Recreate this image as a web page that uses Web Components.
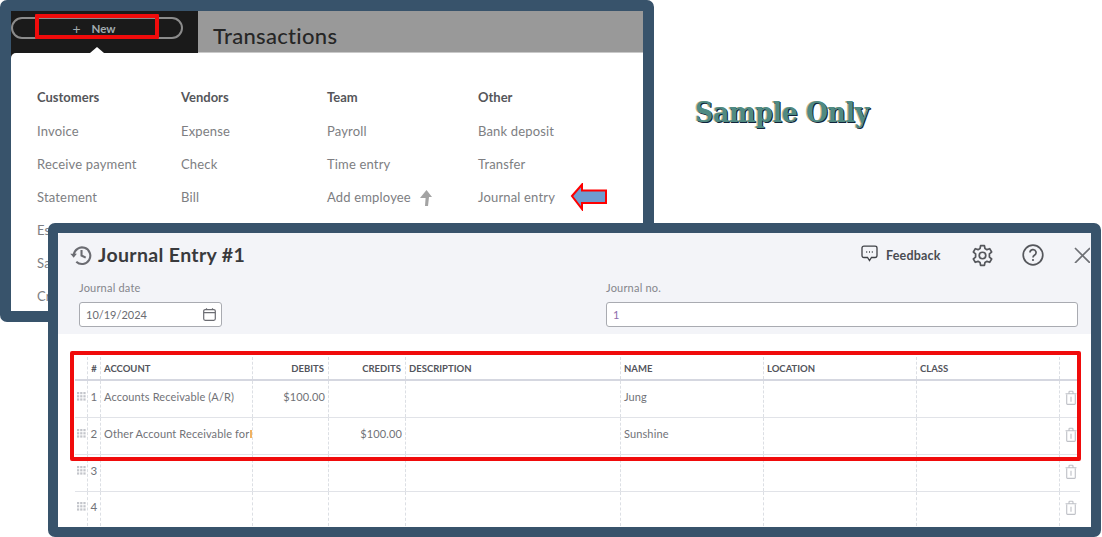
<!DOCTYPE html>
<html lang="en">
<head>
<meta charset="UTF-8">
<title>Journal Entry</title>
<style>
  html, body { margin: 0; height: 537px; overflow: hidden; background: #fff; }
  body { position: relative; width: 1102px; font-family: Lato, "Liberation Sans", sans-serif; }
</style>
</head>
<body>
<back-window></back-window>
<sample-mark>Sample Only</sample-mark>
<journal-window></journal-window>

<script>
const FRAME = '#38536b';

class BackWindow extends HTMLElement {
  constructor() {
    super();
    this.attachShadow({ mode: 'open' });
  }
  connectedCallback() {
    // first column runs under the journal window, only the start of those labels shows
    const cols = [
      ['Customers', 144, ['Invoice', 'Receive payment', 'Statement', 'Es', 'Sa', 'Cr']],
      ['Vendors', 146, ['Expense', 'Check', 'Bill']],
      ['Team', 151, ['Payroll', 'Time entry', 'Add employee']],
      ['Other', 0, ['Bank deposit', 'Transfer', 'Journal entry']],
    ];
    const up = `<svg width="13" height="16" viewBox="0 0 13 16"><path d="M7.5 0 13 7H10L9 16H6L6.6 8H1Z" fill="#a3a3a3"/></svg>`;
    const arrow = `<svg class="arrow" width="38" height="28" viewBox="0 0 38 28"><path d="M2 13 12 1.5V7.5H36V20H12V26Z" fill="#6f9ccf" stroke="#f00" stroke-width="2"/></svg>`;
    this.shadowRoot.innerHTML = `
      <style>
        :host { position: absolute; left: 0; top: 0; width: 654px; height: 322px; box-sizing: border-box;
          border: 11px solid ${FRAME}; border-radius: 7px; background: #1a1a1a; overflow: hidden; display: block; }
        .top { display: flex; height: 42px; }
        .left { width: 187px; padding-top: 6px; box-sizing: border-box; }
        .pill { height: 22px; width: 172px; box-sizing: border-box; border: 2px solid #8b8b8b; border-radius: 11px;
          display: flex; align-items: center; justify-content: center; gap: 11px; padding-right: 6px;
          color: #a2abaf; font-size: 11.5px; font-weight: 700; }
        .pill span:first-child { font-size: 14px; font-weight: 400; }
        .title { flex: 1; background: #999; color: #262626; font-size: 22px; font-weight: 500;
          padding: 11px 0 0 15px; box-sizing: border-box; letter-spacing: .3px; border-bottom: 1px solid #c9c9c9; }
        .menu { position: relative; background: #fff; height: 258px; border-radius: 5px 0 0 0;
          display: flex; padding: 36px 0 0 26px; box-sizing: border-box; }
        .caret { position: absolute; left: 79px; top: -6px; width: 0; height: 0;
          border: 7px solid transparent; border-top: 0; border-bottom: 6px solid #fff; }
        .col h4 { margin: 0 0 18px; font-size: 13px; line-height: 16px; font-weight: 700; color: #55565a; }
        .col div { font-size: 13px; line-height: 17px; margin-bottom: 16px; color: #7d7e82; white-space: nowrap;
          display: flex; align-items: center; gap: 8px; letter-spacing: .17px; }
        .arrow { position: absolute; left: 559px; top: 130px; }
        .mark { position: absolute; left: 24px; top: 3px; width: 124px; height: 25px; box-sizing: border-box;
          border: 4px solid #f00b0b; border-radius: 1px; }
      </style>
      <div class="top">
        <div class="left"><div class="pill"><span>+</span><span>New</span></div></div>
        <div class="title">Transactions</div>
      </div>
      <div class="menu">
        <i class="caret"></i>
        ${cols.map(c => `<section class="col" style="${c[1] ? 'width:' + c[1] + 'px' : ''}">
          <h4>${c[0]}</h4>
          ${c[2].map(t => `<div>${t}${t === 'Add employee' ? up : ''}</div>`).join('')}
        </section>`).join('')}
        ${arrow}
      </div>
      <i class="mark"></i>`;
  }
}
customElements.define('back-window', BackWindow);

class SampleMark extends HTMLElement {
  constructor() {
    super();
    this.attachShadow({ mode: 'open' });
    this.shadowRoot.innerHTML = `
      <style>
        :host { position: absolute; left: 695px; top: 96px; display: block; white-space: nowrap;
          font: 700 28px/34px "DejaVu Serif Condensed", "DejaVu Serif", serif; font-stretch: condensed; letter-spacing: -.32px; color: #4f8a82;
          text-shadow: 1px 1px 0 #10243a, -1px 0 0 #c9b98d; }
      </style>
      <slot></slot>`;
  }
}
customElements.define('sample-mark', SampleMark);

class JournalTable extends HTMLElement {
  constructor() {
    super();
    this.attachShadow({ mode: 'open' });
  }
  connectedCallback() {
    const trash = `<svg width="12" height="16" viewBox="0 0 14 17" fill="none" stroke="#bfc1c7" stroke-width="1.3"><path d="M2 4.5V15.3Q2 16 2.8 16H11.2Q12 16 12 15.3V4.5M.6 3.5H13.4M4.7 3.3V1.4Q4.7.7 5.4.7H8.6Q9.3.7 9.3 1.4V3.3M7 7V13"/></svg>`;
    const grip = `<svg width="9" height="9" viewBox="0 0 9 9" fill="#c3c5cb">${[0, 1, 2].map(y => [0, 1, 2].map(x => `<rect x="${x * 3.2}" y="${y * 3.2}" width="2.2" height="2.2"/>`).join('')).join('')}</svg>`;
    const rows = [
      ['1', 'Accounts Receivable (A/R)', '$100.00', '', 'Jung'],
      ['2', 'Other Account Receivable for', '', '$100.00', 'Sunshine'],
      ['3', '', '', '', ''],
      ['4', '', '', '', ''],
    ];
    const head = ['', '#', 'ACCOUNT', 'DEBITS', 'CREDITS', 'DESCRIPTION', 'NAME', 'LOCATION', 'CLASS', ''];
    const alignR = i => i === 3 || i === 4;
    this.shadowRoot.innerHTML = `
      <style>
        :host { display: block; width: 1005px; }
        .row { display: grid; grid-template-columns: 12px 13px 152px 76px 77px 215px 143px 153px 143px 21px; }
        .head { height: 24px; border-bottom: 2px solid #d5d7e0; box-sizing: border-box; }
        .body { height: 37px; border-bottom: 1px solid #e1e3e8; box-sizing: border-box; }
        .body:last-child { height: 34px; border-bottom: 0; }
        .c { border-left: 1px dashed #dcdfe4; box-sizing: border-box; display: flex; align-items: center;
          padding: 0 3px; overflow: hidden; white-space: nowrap; position: relative; min-width: 0; }
        .c:first-child { border-left: 0; padding: 0 0 0 2px; }
        .head .c { font-size: 9.5px; font-weight: 700; color: #53555c; }
        .head .r { padding-right: 4px; }
        .body .c { font-size: 11px; color: #717277; letter-spacing: .12px; padding-bottom: 6px; }
        .r { justify-content: flex-end; }
        .num { justify-content: center; padding-left: 0; padding-right: 0; }
        .body .num { font-size: 11.5px; padding-left: 0; padding-right: 0; }
        .body .bin { padding: 0 0 3px 5px; }
        .sliver { position: absolute; right: 0; top: 12px; width: 2px; height: 8px; background: #f0b263; }
      </style>
      <div class="row head">
        ${head.map((h, i) => `<div class="c ${alignR(i) ? 'r' : ''} ${i === 1 ? 'num' : ''}">${h}</div>`).join('')}
      </div>
      ${rows.map(r => `<div class="row body">
        <div class="c">${grip}</div>
        <div class="c num">${r[0]}</div>
        <div class="c">${r[1]}${r[0] === '2' ? '<i class="sliver"></i>' : ''}</div>
        <div class="c r">${r[2]}</div>
        <div class="c r">${r[3]}</div>
        <div class="c"></div>
        <div class="c">${r[4]}</div>
        <div class="c"></div>
        <div class="c"></div>
        <div class="c bin">${trash}</div>
      </div>`).join('')}`;
  }
}
customElements.define('journal-table', JournalTable);

class JournalWindow extends HTMLElement {
  constructor() {
    super();
    this.attachShadow({ mode: 'open' });
    const ink = '#6b6c72';
    this.shadowRoot.innerHTML = `
      <style>
        :host { position: absolute; left: 48px; top: 223px; width: 1053px; height: 314px; box-sizing: border-box;
          border: 10px solid ${FRAME}; border-radius: 7px; overflow: hidden; background: #fff; display: block; }
        .head { background: #f3f4f8; height: 101px; box-sizing: border-box; padding: 10px 0 0 13px; border-radius: 4px 0 0 0; }
        .bar { display: flex; align-items: center; height: 24px; }
        h1 { margin: -2px 0 0 6px; font-size: 19.5px; font-weight: 700; color: #393a3d; letter-spacing: .35px; white-space: nowrap; }
        .tools { margin-left: auto; display: flex; align-items: center; width: 231px; flex: none; }
        .fb { display: flex; align-items: center; gap: 8px; font-size: 12.5px; font-weight: 700; color: #4a4c52; letter-spacing: .2px; width: 111px; }
        .fb svg { margin: -2px 0 0 1px; }
        .gear { width: 51px; display: flex; } .help { width: 52px; display: flex; }
        .fields { display: grid; grid-template-columns: 527px 472px; margin: 14px 0 0 8px; }
        label { display: block; font-size: 11px; line-height: 14px; color: #85868c; letter-spacing: .2px; margin-bottom: 7px; }
        .input { height: 25px; box-sizing: border-box; background: #fff; border: 1px solid #a9abb1; border-radius: 3px;
          display: flex; align-items: center; justify-content: space-between; padding: 0 5px 0 6px;
          font-size: 11px; color: #6b6c72; }
        .date { width: 143px; }
        .no { color: #8d6cab; }
        .main { padding: 23px 0 0 17px; }
        .mark { position: absolute; left: 12px; top: 118px; width: 1011px; height: 110px; box-sizing: border-box;
          border: 4px solid #f00b0b; border-radius: 2px; pointer-events: none; }
      </style>
      <div class="head">
        <div class="bar">
          <svg width="22" height="22" viewBox="0 0 21 21" fill="none" stroke="${ink}" stroke-width="2" style="margin-left:-1px"><path d="M3.6 10.5A7.9 7.9 0 1 1 6 16.9M11 5.8V11L15 13"/><path d="M.3 9.2H6.6L3.5 13.2Z" fill="${ink}" stroke="none"/></svg>
          <h1>Journal Entry #1</h1>
          <div class="tools">
            <div class="fb">
              <svg width="17" height="18" viewBox="0 0 17 18" fill="none" stroke="#3f4146" stroke-width="1.3"><path d="M3 1.2H14Q16 1.2 16 3V10.6Q16 12.5 14 12.5H10.5L8.5 15.5 6.5 12.5H3Q1 12.5 1 10.6V3Q1 1.2 3 1.2Z"/><path d="M5.2 7H6.2M8 7H9M10.8 7H11.8" stroke-width="1.4"/></svg>
              <span>Feedback</span>
            </div>
            <div class="gear">
              <svg width="23" height="23" viewBox="0 0 24 24" fill="none" stroke="#55575c" stroke-width="1.8" stroke-linejoin="round"><circle cx="12" cy="12" r="3.4"/><path d="M10 1.8H14L14.6 4.8 16.6 5.9 19.5 4.9 21.5 8.4 19.2 10.4V13.6L21.5 15.6 19.5 19.1 16.6 18.1 14.6 19.2 14 22.2H10L9.4 19.2 7.4 18.1 4.5 19.1 2.5 15.6 4.8 13.6V10.4L2.5 8.4 4.5 4.9 7.4 5.9 9.4 4.8Z"/></svg>
            </div>
            <div class="help">
              <svg width="22" height="22" viewBox="0 0 22 22" fill="none" stroke="#55575c" stroke-width="1.7"><circle cx="11" cy="11" r="9.8"/><path d="M8 8.6A3 3 0 1 1 12.4 11.2Q11 12 11 13.4"/><circle cx="11" cy="16" r=".5" stroke-width="1.2"/></svg>
            </div>
            <svg width="16" height="16" viewBox="0 0 16 16" fill="none" stroke="#6e7075" stroke-width="1.7" style="flex:none"><path d="M1 1 16 16M16 1 1 16"/></svg>
          </div>
        </div>
        <div class="fields">
          <div>
            <label>Journal date</label>
            <div class="input date">10/19/2024
              <svg width="13" height="13" viewBox="0 0 13 13" fill="none" stroke="#6b6c72" stroke-width="1.2"><rect x=".7" y="1.6" width="11.6" height="10.7" rx="1.5"/><path d="M.7 4.6H12.3M3.5.2V2M9.5.2V2"/></svg>
            </div>
          </div>
          <div>
            <label>Journal no.</label>
            <div class="input no">1</div>
          </div>
        </div>
      </div>
      <div class="main"><journal-table></journal-table></div>
      <i class="mark"></i>`;
  }
}
customElements.define('journal-window', JournalWindow);
</script>
</body>
</html>
